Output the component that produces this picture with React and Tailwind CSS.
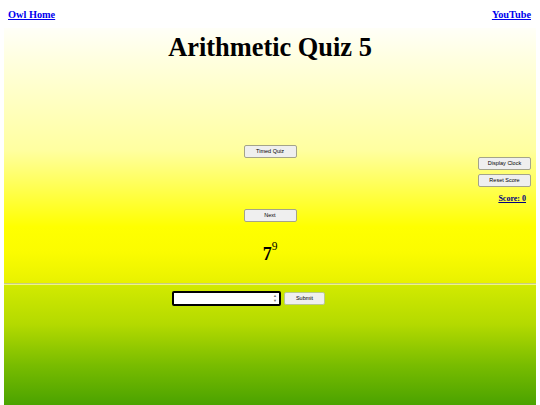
export default function App() {
  const serif = { fontFamily: '"Liberation Serif", "Times New Roman", serif' };
  const sans = { fontFamily: '"Liberation Sans", Arial, sans-serif' };
  const btn =
    "h-[13px] w-[53px] bg-[#efefef] border border-[#a4a48a] rounded-[2px] text-[5.5px] leading-none text-black flex items-center justify-center";
  return (
    <div className="w-[540px] h-[405px] bg-white overflow-hidden" style={serif}>
      <div className="flex justify-between px-[8px] pt-[9px] h-[28px] text-[10.3px] font-bold leading-[12px]">
        <a href="#" className="text-[#0000ee] underline">Owl Home</a>
        <a href="#" className="text-[#0000ee] underline mr-[1px]">YouTube</a>
      </div>
      <div className="mx-[4px] w-[532px]">
        <div className="h-[255px] bg-[linear-gradient(to_bottom,#fffff8_0%,#ffffe0_12%,#ffffa0_48%,#ffff40_66%,#ffff00_78%,#fbfc00_88%,#e8f200_100%)] flex flex-col">
          <h1 className="text-center text-[26.4px] font-bold leading-[30px] pt-[4px] text-black">Arithmetic Quiz 5</h1>
          <div className="grid grid-cols-[1fr_60px_1fr] mt-[83px]">
            <div />
            <div className="flex flex-col items-center" style={sans}>
              <button className={btn}>Timed Quiz</button>
              <button className={btn + " mt-[51px]"}>Next</button>
              <div className="mt-[22px] text-[18px] font-bold leading-[20px] text-black flex items-start" style={serif}>
                <span>7</span>
                <span className="text-[11.5px] font-normal leading-[12px] mt-[-4px]">9</span>
              </div>
            </div>
            <div className="flex flex-col items-end pr-[5px] pt-[12px]">
              <div style={sans} className="flex flex-col gap-[4px]">
                <button className={btn}>Display Clock</button>
                <button className={btn}>Reset Score</button>
              </div>
              <div className="mt-[7px] mr-[5px] text-[8px] font-bold underline text-[#000080] leading-[10px]">Score: 0</div>
            </div>
          </div>
        </div>
        <div className="h-[2px] border-t border-[#c8cc80] bg-[#eef48a]" />
        <div className="h-[130px] bg-[linear-gradient(to_bottom,#d2ea00_0%,#b4da00_30%,#78bc00_62%,#3f9c00_100%)] flex justify-center pt-[6px]">
          <div className="flex items-start gap-[3px] ml-[-43px]">
            <div className="w-[109px] h-[15px] bg-white border-2 border-black rounded-[2px] relative">
              <div className="absolute right-[2px] top-[0px] flex flex-col text-[4px] leading-[5px] text-[#777]" style={sans}>
                <span>▲</span>
                <span>▼</span>
              </div>
            </div>
            <button style={sans} className="mt-[1px] h-[13px] w-[41px] bg-[#efefef] border border-[#b8c890] rounded-[2px] text-[5.5px] leading-none text-black flex items-center justify-center">Submit</button>
          </div>
        </div>
      </div>
    </div>
  );
}
